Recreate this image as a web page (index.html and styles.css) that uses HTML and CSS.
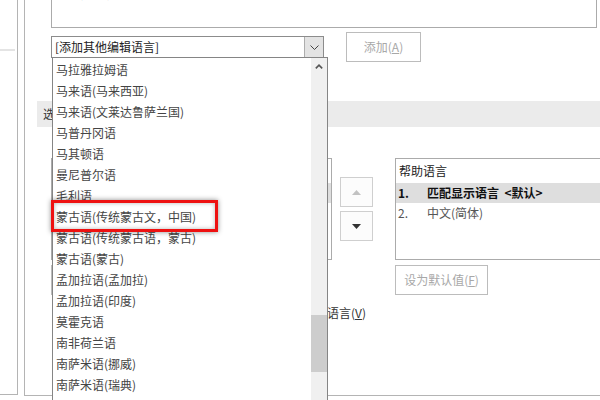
FILE: index.html
```html
<!DOCTYPE html>
<html>
<head>
    <title>语言首选项</title>
    <link rel="stylesheet" href="styles.css">
</head>
<body>
    <div class="nav">
        <div class="nav-sep"></div>
    </div>
    <div class="main">
        <div class="lang-list">
            <div class="lang-row"><span class="lang-name">中文(中国)</span><span class="lang-state">启用</span></div>
        </div>
        <div class="add-row">
            <div class="combo">
                <div class="combo-text">[添加其他编辑语言]</div>
                <div class="combo-btn">
                    <svg width="9" height="5" viewBox="0 0 9 5"><polyline points="0.5,0.5 4.5,4.5 8.5,0.5" fill="none" stroke="#444" stroke-width="1"/></svg>
                </div>
            </div>
            <div class="btn btn-add">添加(<u>A</u>)</div>
        </div>
        <div class="section-title">选择显示语言和帮助语言</div>
        <div class="lists">
            <div class="col-display">
                <div class="listbox">
                    <div class="list-head">显示语言</div>
                    <div class="list-item selected"><span class="num">1.</span>匹配 Microsoft Windows &lt;默认&gt;</div>
                    <div class="list-item"><span class="num">2.</span>中文(简体)</div>
                </div>
                <div class="btn btn-default">设为默认值(<u>D</u>)</div>
            </div>
            <div class="move-btns">
                <div class="move-btn">
                    <svg width="9" height="5" viewBox="0 0 9 5"><polygon points="0,5 4.5,0 9,5" fill="#c2c2c2"/></svg>
                </div>
                <div class="move-btn">
                    <svg width="9" height="5" viewBox="0 0 9 5"><polygon points="0,0 9,0 4.5,5" fill="#333"/></svg>
                </div>
            </div>
            <div class="col-help">
                <div class="listbox">
                    <div class="list-head">帮助语言</div>
                    <div class="list-item selected"><span class="num">1.</span>匹配显示语言&nbsp;&nbsp;&lt;默认&gt;</div>
                    <div class="list-item"><span class="num">2.</span>中文(简体)</div>
                </div>
                <div class="btn btn-default">设为默认值(<u>F</u>)</div>
            </div>
        </div>
        <div class="option-row">□ 查看每种语言的显示语言(<u>V</u>)</div>
    </div>

    <div class="dropdown">
        <div class="dropdown-items">
            <div class="item">马拉雅拉姆语</div>
            <div class="item">马来语(马来西亚)</div>
            <div class="item">马来语(文莱达鲁萨兰国)</div>
            <div class="item">马普丹冈语</div>
            <div class="item">马其顿语</div>
            <div class="item">曼尼普尔语</div>
            <div class="item">毛利语</div>
            <div class="item">蒙古语(传统蒙古文，中国)</div>
            <div class="item">蒙古语(传统蒙古语，蒙古)</div>
            <div class="item">蒙古语(蒙古)</div>
            <div class="item">孟加拉语(孟加拉)</div>
            <div class="item">孟加拉语(印度)</div>
            <div class="item">莫霍克语</div>
            <div class="item">南非荷兰语</div>
            <div class="item">南萨米语(挪威)</div>
            <div class="item">南萨米语(瑞典)</div>
        </div>
        <div class="scrollbar">
            <div class="scroll-up">
                <svg width="8" height="5" viewBox="0 0 8 5"><polyline points="0.8,4.4 4,1.2 7.2,4.4" fill="none" stroke="#555" stroke-width="1.6"/></svg>
            </div>
            <div class="scroll-thumb"></div>
        </div>
    </div>

    <div class="callout"></div>
</body>
</html>
```

FILE: styles.css
```css
body {
    margin: 0;
    width: 600px;
    height: 400px;
    overflow: hidden;
    position: relative;
    display: flex;
    background-color: #fff;
    font-family: "Noto Sans CJK SC", "Microsoft YaHei", sans-serif;
    font-size: 12px;
    color: #333;
}
u {
    text-decoration: underline;
    text-underline-offset: 1px;
}
.nav {
    flex: 0 0 18px;
    height: 395px;
    box-sizing: border-box;
    border-right: 1px solid #b4b4b4;
    border-bottom: 1px solid #b4b4b4;
}
.nav-sep {
    margin-top: 49px;
    width: 15px;
    height: 2px;
    background-color: #e4e4e4;
}
.main {
    flex: 0 0 620px;
    height: 396px;
    margin-left: 6px;
    box-sizing: border-box;
    border-left: 1px solid #b4b4b4;
    border-bottom: 1px solid #b4b4b4;
    padding-left: 12px;
}
.lang-list {
    margin: -21px 0 0 14px;
    width: 546px;
    height: 49px;
    box-sizing: border-box;
    border: 1px solid #ababab;
}
.lang-row {
    padding: 3px 0 0 3px;
    line-height: 20px;
    display: flex;
    color: #444;
}
.lang-name {
    width: 154px;
}
.add-row {
    display: flex;
    align-items: center;
    height: 30px;
    margin: 4px 0 0 14px;
}
.combo {
    width: 273px;
    height: 22px;
    box-sizing: border-box;
    border: 1px solid #8c8c8c;
    display: flex;
}
.combo-text {
    flex: 1;
    padding-left: 3px;
    line-height: 20px;
    color: #222;
}
.combo-btn {
    width: 19px;
    box-sizing: border-box;
    border-left: 1px solid #adadad;
    background-color: #e3e3e3;
    display: flex;
    align-items: center;
    justify-content: center;
}
.btn {
    height: 30px;
    box-sizing: border-box;
    border: 1px solid #bcbcbc;
    background-color: #fff;
    color: #a8a8a8;
    line-height: 28px;
    text-align: center;
}
.btn-add {
    width: 75px;
    margin-left: 22px;
}
.section-title {
    margin-top: 39px;
    height: 26px;
    line-height: 26px;
    padding-left: 6px;
    background-color: #ebebeb;
    color: #333;
}
.lists {
    display: flex;
    align-items: flex-start;
    margin: 31px 0 0 14px;
}
.col-display {
    width: 281px;
}
.col-help {
    width: 240px;
    margin-left: 22px;
}
.listbox {
    height: 102px;
    box-sizing: border-box;
    border: 1px solid #ababab;
}
.list-head {
    height: 24px;
    line-height: 24px;
    padding-left: 3px;
    color: #222;
}
.list-item {
    height: 20px;
    line-height: 20px;
    padding-left: 2px;
    color: #555;
    display: flex;
}
.list-item.selected {
    background-color: #dedede;
    color: #111;
    font-weight: bold;
}
.num {
    width: 29px;
}
.btn-default {
    width: 93px;
    margin-top: 5px;
}
.move-btns {
    width: 33px;
    margin: 19px 0 0 8px;
    display: flex;
    flex-direction: column;
    gap: 4px;
}
.move-btn {
    height: 30px;
    box-sizing: border-box;
    border: 1px solid #cfcfcf;
    background-color: #fcfcfc;
    display: flex;
    align-items: center;
    justify-content: center;
}
.option-row {
    width: 341px;
    margin-top: 9px;
    margin-left: -12px;
    line-height: 18px;
    text-align: right;
    color: #333;
}

/* open dropdown list of the combo box */
.dropdown {
    position: absolute;
    left: 52px;
    top: 57px;
    width: 276px;
    height: 360px;
    box-sizing: border-box;
    border: 1px solid #858585;
    background-color: #fff;
    display: flex;
    overflow: hidden;
}
.dropdown-items {
    flex: 1;
    padding-top: 1px;
}
.item {
    height: 21px;
    line-height: 21px;
    padding-left: 3px;
    color: #444;
    white-space: nowrap;
}
.scrollbar {
    width: 16px;
    background-color: #f0f0f0;
}
.scroll-up {
    height: 17px;
    display: flex;
    align-items: center;
    justify-content: center;
}
.scroll-thumb {
    margin-top: 240px;
    height: 57px;
    background-color: #cdcdcd;
}

/* red annotation frame */
.callout {
    position: absolute;
    left: 51px;
    top: 200px;
    width: 167px;
    height: 32px;
    box-sizing: border-box;
    border: 3px solid #ee1111;
    box-shadow: 0 0 5px rgba(0, 0, 0, 0.45), inset 0 0 4px rgba(0, 0, 0, 0.3);
}
```
